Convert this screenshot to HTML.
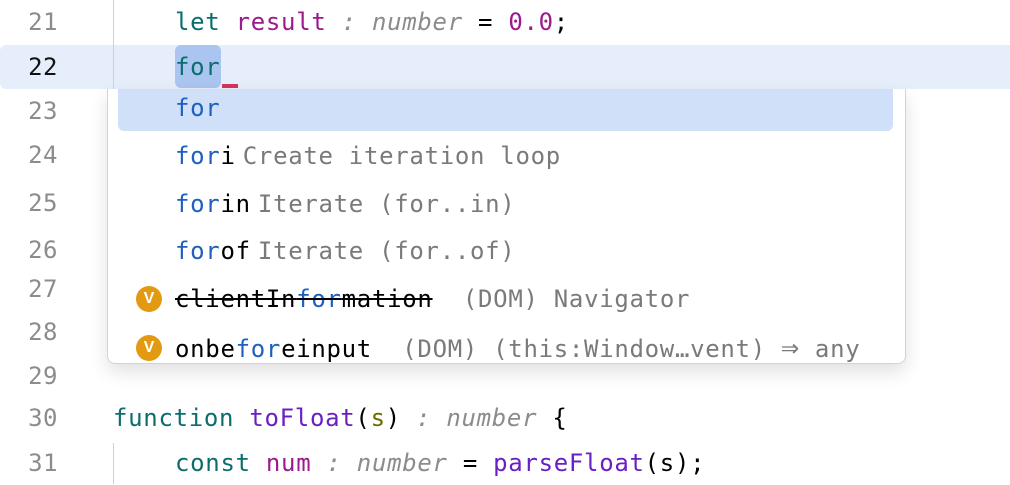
<!DOCTYPE html>
<html><head><meta charset="utf-8"><style>
body{margin:0;width:1010px;height:484px;background:#fff;overflow:hidden;position:relative;font-family:"DejaVu Sans Mono","Liberation Mono",monospace;font-size:24px;}
.l{position:absolute;white-space:pre;line-height:44px;height:44px;letter-spacing:0.7px}
.n{position:absolute;left:0;width:58px;text-align:right;color:#8c8c8c;line-height:44px;font-size:24px;letter-spacing:0.5px}
.kw{color:#0b6e6e}.pv{color:#9b1a8c}.ty{color:#8c8c8c;font-style:italic}.fn{color:#6a1fc4}.pa{color:#6b6b00}
.m{color:#1f5fbf}.g{color:#7a7a7a}
.ic{position:absolute;width:26px;height:26px;border-radius:50%;background:#e39a12;color:#fff;font:bold 16px "Liberation Sans",sans-serif;text-align:center;line-height:26px}
.d{margin-left:-8px}
</style></head><body>
<div style="position:absolute;left:0;top:45px;width:1010px;height:44px;background:#e6eefb;border-radius:6px 0 0 6px"></div>
<div style="position:absolute;left:113px;top:0;width:1px;height:89px;background:#d0d0d0"></div>
<div style="position:absolute;left:113px;top:443px;width:1px;height:41px;background:#d0d0d0"></div>
<div class="n" style="top:0">21</div>
<div class="n" style="top:45px;color:#111">22</div>
<div class="n" style="top:89px">23</div>
<div class="n" style="top:133px">24</div>
<div class="n" style="top:181px">25</div>
<div class="n" style="top:228px">26</div>
<div class="n" style="top:267px">27</div>
<div class="n" style="top:310px">28</div>
<div class="n" style="top:354px">29</div>
<div class="n" style="top:396px">30</div>
<div class="n" style="top:441px">31</div>
<div class="l" style="left:175px;top:0"><span class="kw">let</span> <span class="pv">result</span><span class="ty"> : number</span> = <span class="pv">0.0</span>;</div>
<div style="position:absolute;left:175px;top:45px;width:46px;height:43px;background:#a9c5f0;border-radius:6px"></div>
<div class="l" style="left:175px;top:45px"><span class="kw">for</span></div>
<div style="position:absolute;left:222px;top:84px;width:16px;height:4px;background:#d6335a"></div>
<div class="l" style="left:113px;top:396px"><span class="kw">function</span> <span class="fn">toFloat</span>(<span class="pa">s</span>)<span class="ty"> : number</span> {</div>
<div class="l" style="left:175px;top:441px"><span class="kw">const</span> <span class="pv">num</span><span class="ty"> : number</span> = <span class="fn">parseFloat</span>(s);</div>
<div style="position:absolute;left:107px;top:89px;width:797px;height:274px;background:#fff;border:1px solid #d4d4d4;border-top:none;border-radius:0 0 8px 8px;box-shadow:0 8px 18px rgba(0,0,0,.12)"></div>
<div style="position:absolute;left:118px;top:89px;width:775px;height:42px;background:#cfe0f8;border-radius:0 0 6px 6px"></div>
<div class="l" style="left:175px;top:86px"><span class="m">for</span></div>
<div class="l" style="left:175px;top:134px"><span class="m">for</span>i <span class="g d">Create iteration loop</span></div>
<div class="l" style="left:175px;top:182px"><span class="m">for</span>in <span class="g d">Iterate (for..in)</span></div>
<div class="l" style="left:175px;top:229px"><span class="m">for</span>of <span class="g d">Iterate (for..of)</span></div>
<div class="ic" style="left:136px;top:286px">V</div>
<div class="l" style="left:175px;top:277px"><span style="text-decoration:line-through">clientIn<span class="m">for</span>mation</span>  <span class="g">(DOM) Navigator</span></div>
<div class="ic" style="left:136px;top:335px">V</div>
<div class="l" style="left:175px;top:326px">onbe<span class="m">for</span>einput  <span class="g">(DOM) (this:Window…vent) <span style="font-size:30px">⇒</span> any</span></div>
</body></html>
